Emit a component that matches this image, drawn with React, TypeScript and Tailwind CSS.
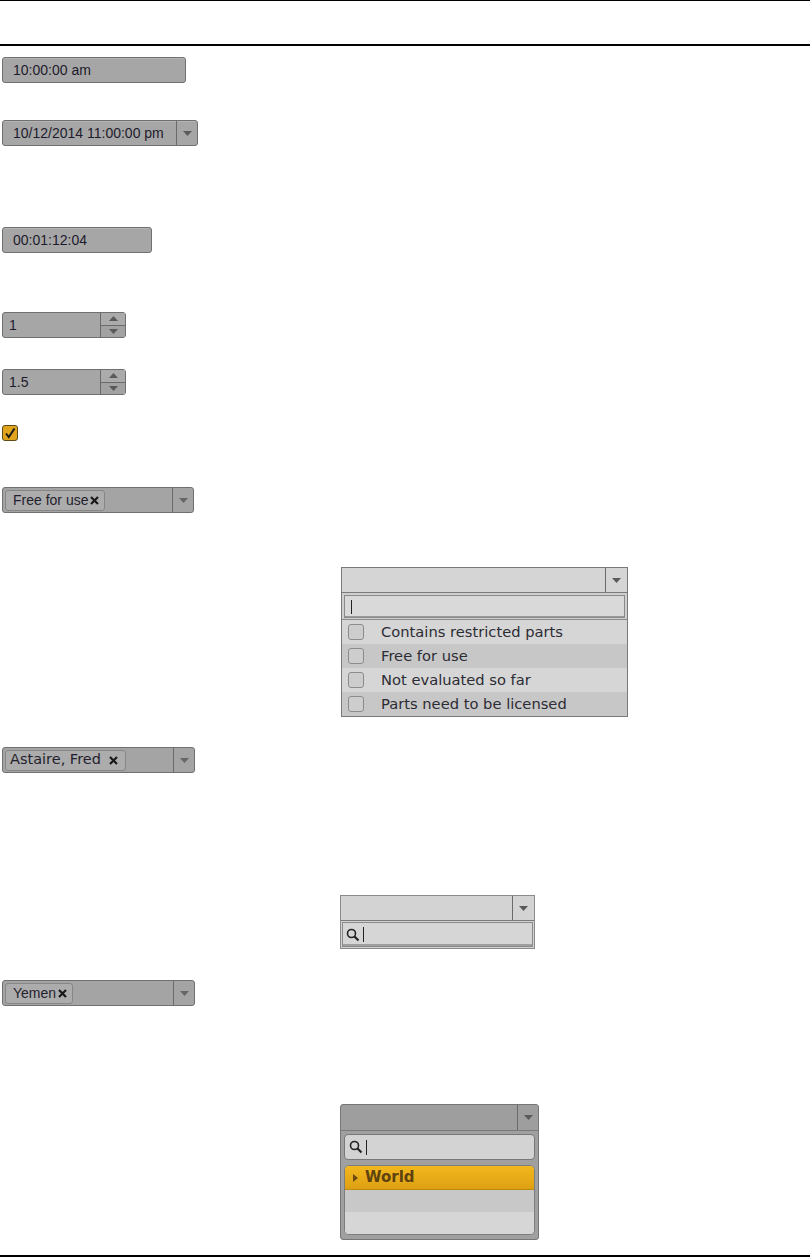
const FIELD_FONT = "font-['Liberation_Sans',Arial,sans-serif]";

function Arrow({ color = "#5a5a5a" }: { color?: string }) {
    return (
        <svg width="9" height="5" viewBox="0 0 9 5">
            <path d="M0 0 L9 0 L4.5 5 Z" fill={color} />
        </svg>
    );
}

function UpArrow() {
    return (
        <svg width="9" height="5" viewBox="0 0 9 5">
            <path d="M0 5 L9 5 L4.5 0 Z" fill="#5a5a5a" />
        </svg>
    );
}

function Field({ value, width, button }: { value: string; width: string; button?: boolean }) {
    return (
        <div className={`${width} h-[26px] flex rounded-[3px] border border-[#707070] bg-[#a6a6a6] shadow-[inset_0_1px_0_#b4b4b4]`}>
            <div className={`flex-1 flex items-center pl-[10px] text-[14px] text-[#1e1b2c] ${FIELD_FONT}`}>{value}</div>
            {button && (
                <div className="w-[21px] border-l border-[#6a6a6a] flex items-center justify-center">
                    <Arrow />
                </div>
            )}
        </div>
    );
}

function Spinner({ value }: { value: string }) {
    return (
        <div className="w-[124px] h-[26px] flex rounded-[3px] border border-[#707070] bg-[#a6a6a6]">
            <div className={`flex-1 flex items-center pl-[6px] text-[14px] text-[#1e1b2c] ${FIELD_FONT}`}>{value}</div>
            <div className="w-[25px] border-l border-[#6a6a6a] flex flex-col">
                <div className="flex-1 flex items-center justify-center border-b border-[#6a6a6a] bg-[#ababab]">
                    <UpArrow />
                </div>
                <div className="flex-1 flex items-center justify-center bg-[#a2a2a2]">
                    <Arrow />
                </div>
            </div>
        </div>
    );
}

function TagField({ tag, width, dejavu }: { tag: string; width: string; dejavu?: boolean }) {
    return (
        <div className={`${width} h-[26px] flex rounded-[3px] border border-[#707070] bg-[#a4a4a4]`}>
            <div className="flex-1 flex items-center pl-[2px]">
                <div
                    className={`h-[21px] flex items-center rounded-[3px] border border-[#868686] bg-[#acacac] text-[#241f2e] ${
                        dejavu
                            ? "font-['DejaVu_Sans',sans-serif] text-[14.5px] pl-[4px] pr-[7px] gap-[8px]"
                            : `${FIELD_FONT} text-[14px] pl-[7px] pr-[5px] gap-[2px]`
                    }`}
                >
                    <span>{tag}</span>
                    <svg width="9" height="9" viewBox="0 0 9 9">
                        <path d="M1 1 L8 8 M8 1 L1 8" stroke="#1a1a1a" strokeWidth="2.2" />
                    </svg>
                </div>
            </div>
            <div className="w-[21px] border-l border-[#6a6a6a] flex items-center justify-center">
                <Arrow color="#666" />
            </div>
        </div>
    );
}

function SearchIcon() {
    return (
        <svg width="14" height="14" viewBox="0 0 14 14">
            <circle cx="5.5" cy="5.5" r="4" fill="none" stroke="#222" strokeWidth="1.6" />
            <path d="M8.5 8.5 L12.5 12.5" stroke="#222" strokeWidth="2.2" />
        </svg>
    );
}

const options = ["Contains restricted parts", "Free for use", "Not evaluated so far", "Parts need to be licensed"];

function CheckList() {
    return (
        <div className="ml-[341px] w-[287px] border border-[#7a7a7a] bg-[#cfcfcf]">
            <div className="h-[25px] flex border-b border-[#7a7a7a] bg-[#d5d5d5]">
                <div className="flex-1" />
                <div className="w-[22px] border-l border-[#6a6a6a] flex items-center justify-center">
                    <Arrow />
                </div>
            </div>
            <div className="px-[2px] pt-[2px] pb-[1px] border-b border-[#8a8a8a]">
                <div className="h-[23px] border border-[#8a8a8a] bg-[#d9d9d9] shadow-[inset_0_-1px_0_#9a9a9a] flex items-center pl-[6px]">
                    <div className="w-px h-[14px] bg-[#222]" />
                </div>
            </div>
            {options.map((o, i) => (
                <div
                    key={o}
                    className={`h-[24px] flex items-center pl-[6px] gap-[17px] font-['DejaVu_Sans',sans-serif] text-[14.7px] text-[#2c2c34] ${
                        i % 2 === 0 ? "bg-[#d6d6d6]" : "bg-[#c7c7c7]"
                    }`}
                >
                    <div className="w-[16px] h-[16px] rounded-[3px] border border-[#8c8c8c] bg-[#cdcdcd]" />
                    <span>{o}</span>
                </div>
            ))}
        </div>
    );
}

function SearchDropdown() {
    return (
        <div className="ml-[340px] w-[195px] border border-[#8a8a8a] bg-[#d3d3d3]">
            <div className="h-[25px] flex border-b border-[#7a7a7a]">
                <div className="flex-1" />
                <div className="w-[22px] border-l border-[#6a6a6a] flex items-center justify-center">
                    <Arrow />
                </div>
            </div>
            <div className="p-[1px]">
                <div className="h-[25px] border border-[#8a8a8a] bg-[#d6d6d6] shadow-[inset_0_-2px_0_#a0a0a0] flex items-center pl-[3px] gap-[3px]">
                    <SearchIcon />
                    <div className="w-px h-[15px] bg-[#222]" />
                </div>
            </div>
        </div>
    );
}

function TreeDropdown() {
    return (
        <div className="ml-[340px] w-[199px] rounded-[3px] border border-[#767676] bg-[#a0a0a0]">
            <div className="h-[26px] flex border-b border-[#7a7a7a] bg-[#9e9e9e] rounded-t-[3px]">
                <div className="flex-1" />
                <div className="w-[21px] border-l border-[#6a6a6a] flex items-center justify-center">
                    <Arrow />
                </div>
            </div>
            <div className="px-[3px] pt-[3px] pb-[4px]">
                <div className="h-[26px] rounded-[4px] border border-[#777] bg-[#d3d3d3] flex items-center pl-[4px] gap-[3px]">
                    <SearchIcon />
                    <div className="w-px h-[15px] bg-[#222]" />
                </div>
                <div className="mt-[5px] rounded-[5px] border border-[#7d7d7d] bg-[#d6d6d6] overflow-hidden">
                    <div className="h-[24px] bg-gradient-to-b from-[#f2b71e] to-[#dea012] flex items-center pl-[8px] gap-[7px] font-['DejaVu_Sans',sans-serif] text-[15px] font-bold text-[#5e4210] border-b border-[#c08a10]">
                        <svg width="5" height="8" viewBox="0 0 5 8">
                            <path d="M0 0 L5 4 L0 8 Z" fill="#6a4a10" />
                        </svg>
                        <span>World</span>
                    </div>
                    <div className="h-[22px] bg-[#c8c8c8]" />
                    <div className="h-[22px] bg-[#d6d6d6]" />
                </div>
            </div>
        </div>
    );
}

export default function App() {
    return (
        <div className="w-[810px] h-[1257px] bg-white flex flex-col">
            <div className="h-px bg-black" />
            <div className="mt-[43px] h-[2px] bg-black" />
            <div className="pl-[2px] flex flex-col">
                <div className="mt-[11px]">
                    <Field value="10:00:00 am" width="w-[184px]" />
                </div>
                <div className="mt-[37px]">
                    <Field value="10/12/2014 11:00:00 pm" width="w-[196px]" button />
                </div>
                <div className="mt-[81px]">
                    <Field value="00:01:12:04" width="w-[150px]" />
                </div>
                <div className="mt-[59px]">
                    <Spinner value="1" />
                </div>
                <div className="mt-[31px]">
                    <Spinner value="1.5" />
                </div>
                <div className="mt-[30px]">
                    <div className="w-[16px] h-[16px] rounded-[3px] border border-[#5c4a18] bg-[#e0a51c] flex items-center justify-center">
                        <svg width="12" height="12" viewBox="0 0 12 12">
                            <path d="M2 6.5 L4.8 10 L10.5 1.5" fill="none" stroke="#1a1a1a" strokeWidth="2" />
                        </svg>
                    </div>
                </div>
                <div className="mt-[46px]">
                    <TagField tag="Free for use" width="w-[192px]" />
                </div>
            </div>
            <div className="mt-[54px]">
                <CheckList />
            </div>
            <div className="pl-[2px] mt-[30px]">
                <TagField tag="Astaire, Fred" width="w-[193px]" dejavu />
            </div>
            <div className="mt-[122px]">
                <SearchDropdown />
            </div>
            <div className="pl-[2px] mt-[31px]">
                <TagField tag="Yemen" width="w-[193px]" />
            </div>
            <div className="mt-[98px]">
                <TreeDropdown />
            </div>
            <div className="mt-auto h-[2px] bg-black" />
        </div>
    );
}
